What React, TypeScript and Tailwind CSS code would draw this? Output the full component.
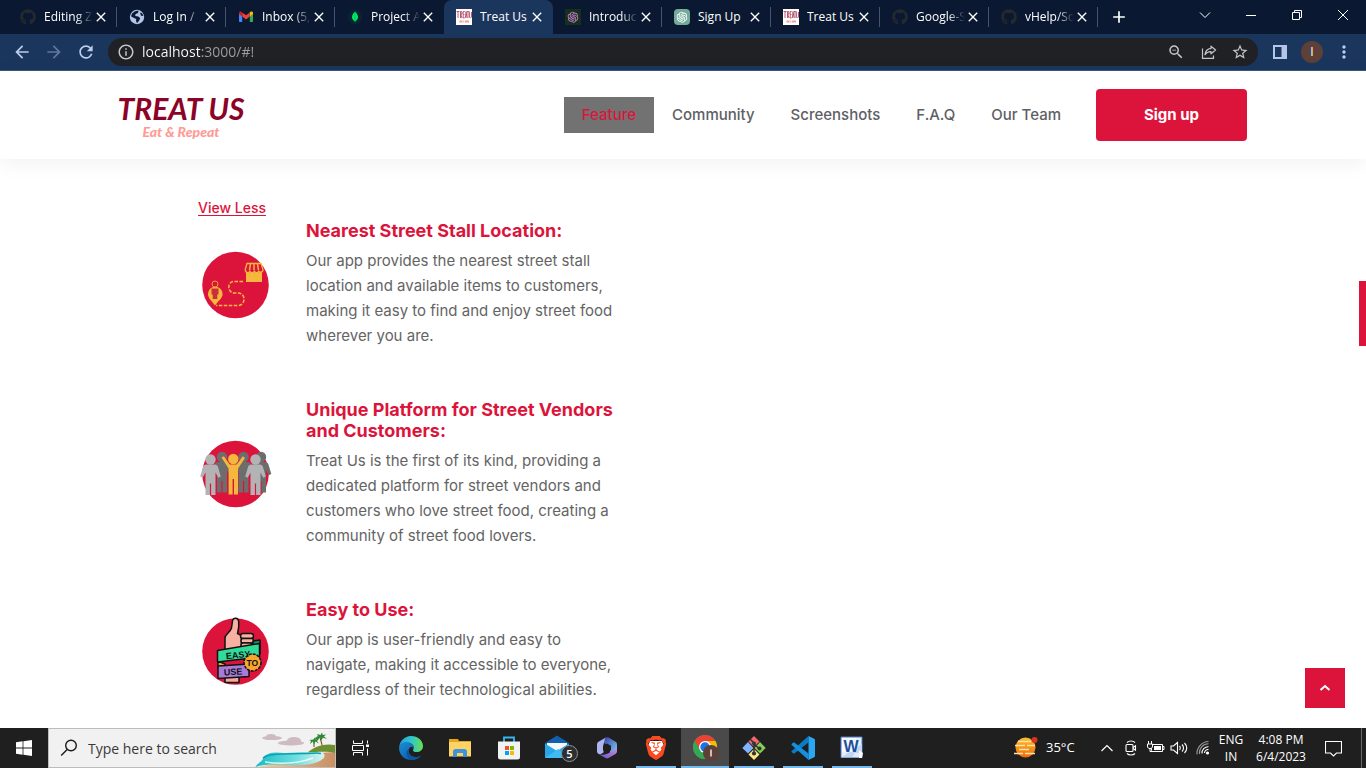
import React from "react";
import { FaGithub } from "react-icons/fa";
import { AiOutlineOpenAI } from "react-icons/ai";
import { SiBrave } from "react-icons/si";
import {
  MdArrowBack,
  MdArrowForward,
  MdRefresh,
  MdInfoOutline,
  MdStarBorder,
  MdZoomOut,
  MdMoreVert,
  MdClose,
  MdAdd,
} from "react-icons/md";

/* ---------- Favicons ---------- */

function GithubMark() {
  return <FaGithub className="size-4 shrink-0 text-[#24292e]" />;
}

function GlobeMark() {
  return (
    <svg viewBox="0 0 16 16" className="size-4 shrink-0">
      <circle cx="8" cy="8" r="7.2" fill="#b4c5e8" />
      <path d="M6 2.2 9.5 1.5 9 4 6.6 5l-.4 2 3.2.4 1.8 1.8-1 2.4-2.2 2.6-1-2.2.2-2L4 8.4 2 7.2 3 4.6Z" fill="#0a1931" />
      <path d="m11 3.5 2.4 1 .8 2.6-2.2-.4Z" fill="#0a1931" />
    </svg>
  );
}

function GmailMark() {
  return (
    <svg viewBox="0 0 16 16" className="size-4 shrink-0">
      <path d="M1 4v8.2c0 .5.4.9.9.9h2.3V6.4Z" fill="#4285f4" />
      <path d="M15 4v8.2c0 .5-.4.9-.9.9h-2.3V6.4Z" fill="#34a853" />
      <path d="M11.800 3.500v4L15 5.100V4c0-1.400-1.500-1.900-2.500-1.200Z" fill="#fbbc04" />
      <path d="M4.200 7.500v-4L8 6.300l3.800-2.800v4L8 10.400Z" fill="#ea4335" />
      <path d="M1 4v1.100l3.200 2.400v-4l-.7-.6C2.500 2.100 1 2.700 1 4Z" fill="#c5221f" />
    </svg>
  );
}

function LeafMark() {
  return (
    <svg viewBox="0 0 16 16" className="size-4 shrink-0">
      <circle cx="8" cy="8" r="7.500" fill="#062431" />
      <path d="M8 2.500c2 2.200 3 3.800 3 5.600 0 2-1.200 3.200-2.700 4.200L8 14l-.3-1.700C6.200 11.300 5 10.100 5 8.100c0-1.800 1-3.400 3-5.600Z" fill="#00ed64" />
      <path d="M8 3v9.500" stroke="#00a34a" strokeWidth=".6" />
    </svg>
  );
}

function TreatMark() {
  return (
    <svg viewBox="0 0 16 16" className="size-4 shrink-0">
      <path fill="#fff" d="M0 0h16v16H0z" />
      <g stroke="#b04a64" strokeWidth=".9" fill="none">
        <path d="M.5 2.500h3M2 2.500V9M4.500 9V2.500h1.300L6 5H4.700L6 9M8.700 2.500H7.200V9h1.500M7.200 5.500h1.300M9.300 9l.8-6.500.9 6.500M10.900 2.500h2M12 2.500V9M13.600 2.500V8.500h1M15.500 3v5.500" />
      </g>
      <path d="M3.500 12.500h3M7.300 12.500h1M9 12.500h4" stroke="#f79a9a" strokeWidth="1.800" />
    </svg>
  );
}

function KnotDark() {
  return (
    <span className="flex size-4 shrink-0 items-center justify-center bg-[#17301c]">
      <AiOutlineOpenAI className="size-3.5 text-[#c77fd6]" />
    </span>
  );
}

function KnotGreen() {
  return (
    <span className="flex size-4 shrink-0 items-center justify-center rounded-sm bg-[#74aa9c]">
      <AiOutlineOpenAI className="size-3.5 text-white" />
    </span>
  );
}

const tabs = [
  { title: "Editing Z", icon: <GithubMark /> },
  { title: "Log In /", icon: <GlobeMark /> },
  { title: "Inbox (5,", icon: <GmailMark /> },
  { title: "Project A", icon: <LeafMark /> },
  { title: "Treat Us", icon: <TreatMark />, active: true },
  { title: "Introduc", icon: <KnotDark /> },
  { title: "Sign Up", icon: <KnotGreen /> },
  { title: "Treat Us", icon: <TreatMark /> },
  { title: "Google-S", icon: <GithubMark /> },
  { title: "vHelp/So", icon: <GithubMark /> },
];

function TabStrip() {
  return (
    <div className="flex h-[34px] bg-[#0a1931] pl-2 text-white">
      <div className="flex w-[1090px] min-w-0">
        {tabs.map((tab, i) => (
          <div
            key={i}
            className={
              tab.active
                ? "relative flex min-w-0 flex-1 items-center rounded-t-lg bg-[#1b365d] pr-2 pl-3"
                : "relative flex min-w-0 flex-1 items-center pr-2 pl-3"
            }
          >
            {tab.icon}
            <span
              className={
                tab.title === "Treat Us" || tab.title === "Sign Up"
                  ? "ml-2 min-w-0 flex-1 overflow-hidden text-[12px] leading-4 whitespace-nowrap"
                  : "ml-2 min-w-0 flex-1 overflow-hidden text-[12px] leading-4 whitespace-nowrap [mask-image:linear-gradient(to_right,black_65%,transparent)]"
              }
            >
              {tab.title}
            </span>
            <button aria-label={`Close ${tab.title}`} className="shrink-0">
              <MdClose className="size-4" />
            </button>
            {!tab.active && i !== 3 && (
              <span className="absolute top-[7px] right-0 h-5 w-px bg-[#46536a]" />
            )}
          </div>
        ))}
      </div>
      <button aria-label="New tab" className="ml-[11px]">
        <MdAdd className="size-5" />
      </button>
      <div className="ml-auto flex items-center pb-1">
        <button aria-label="Search tabs" className="flex w-[46px] justify-center">
          <svg viewBox="0 0 12 12" className="size-3" fill="none" stroke="white">
            <path d="m1 3.500 5 5 5-5" />
          </svg>
        </button>
        <button aria-label="Minimize" className="flex w-[46px] justify-center">
          <svg viewBox="0 0 10 10" className="size-2.5" stroke="white">
            <path d="M0 5.500h10" />
          </svg>
        </button>
        <button aria-label="Restore" className="flex w-[46px] justify-center">
          <svg viewBox="0 0 10 10" className="size-2.5" fill="none" stroke="white">
            <path d="M.5 2.500h7v7h-7zM2.500 2.500v-2h7v7h-2" />
          </svg>
        </button>
        <button aria-label="Close window" className="flex w-[46px] justify-center">
          <svg viewBox="0 0 10 10" className="size-2.5" stroke="white">
            <path d="m0 0 10 10M10 0 0 10" />
          </svg>
        </button>
      </div>
    </div>
  );
}

function Toolbar() {
  return (
    <div className="flex h-[37px] items-center border-b border-[#3d5681] bg-[#1b365d] pr-3 pl-3">
      <button aria-label="Back" className="mr-3">
        <MdArrowBack className="size-5 text-[#bccdec]" />
      </button>
      <button aria-label="Forward" className="mr-3">
        <MdArrowForward className="size-5 text-[#61779c]" />
      </button>
      <button aria-label="Reload" className="mr-3">
        <MdRefresh className="size-5 text-[#bccdec]" />
      </button>
      <div className="flex h-7 min-w-0 flex-1 items-center rounded-full bg-[#202124] px-[9px] text-[#c4c7ca]">
        <MdInfoOutline className="size-[18px] shrink-0" />
        <div className="relative ml-[7px] h-6 flex-1 text-[14px] leading-6">
          <input
            aria-label="Address"
            defaultValue="localhost:3000/#!"
            className="block h-6 w-full bg-transparent bg-gradient-to-r from-white from-[58px] to-[#9aa0a6] to-[58px] bg-clip-text text-transparent outline-none"
          />
        </div>
        <button aria-label="Zoom">
          <MdZoomOut className="size-[18px]" />
        </button>
        <button aria-label="Share" className="ml-4">
          <svg viewBox="0 0 16 16" className="size-4" fill="none" stroke="currentColor" strokeWidth="1.200">
            <path d="M1.500 4.500v9.900h11v-3" />
            <path d="M10 2.200 14.600 6 10 9.800V7.600C7 7.500 5.300 8.600 4 10.800c.4-3.700 2.600-6 6-6.400Z" strokeLinejoin="round" />
          </svg>
        </button>
        <button aria-label="Bookmark" className="ml-[14px]">
          <MdStarBorder className="size-[18px]" />
        </button>
      </div>
      <button aria-label="Side panel" className="ml-[15px]">
        <svg viewBox="0 0 14 14" className="size-3.5">
          <path d="M1 1h12v12H1z" fill="none" stroke="#b4c5e8" strokeWidth="2" />
          <path d="M8.500 0H14v14H8.500z" fill="#b4c5e8" />
        </svg>
      </button>
      <button className="ml-[14px] size-[22px] rounded-full bg-[#5d4037] text-[12px] leading-[22px] text-white">
        I
      </button>
      <button aria-label="Menu" className="ml-[11px]">
        <MdMoreVert className="size-5 text-[#bccdec]" />
      </button>
    </div>
  );
}

/* ---------- Site ---------- */

function SiteHeader() {
  return (
    <header className="flex h-[88px] shrink-0 items-center bg-white pr-[119px] pl-[117px] shadow-[0_4px_20px_rgba(0,0,0,0.06)]">
      <a href="#home" className="flex w-32 flex-col items-center pt-1 italic">
        <span className="font-['Lato',sans-serif] text-[30px] leading-[30px] font-bold whitespace-nowrap text-[#8c0327]">
          TREAT US
        </span>
        <span className="font-['Lato',sans-serif] text-[14px] leading-[18px] font-black whitespace-nowrap text-[#ff9b95]">
          Eat &amp; Repeat
        </span>
      </a>
      <nav className="ml-auto flex items-center text-[15px] leading-[18px] font-medium text-[#5d6064]">
        <a href="#feature" className="bg-[#727272] px-[18px] py-[9px] text-[#dc143c]">
          Feature
        </a>
        <a href="#community" className="px-[18px]">
          Community
        </a>
        <a href="#screenshots" className="px-[18px]">
          Screenshots
        </a>
        <a href="#faq" className="px-[18px]">
          F.A.Q
        </a>
        <a href="#team" className="pr-[35px] pl-[18px]">
          Our Team
        </a>
        <button className="h-[52px] w-[151px] rounded bg-[#dc143c] font-bold text-white">
          Sign up
        </button>
      </nav>
    </header>
  );
}

function RouteIcon() {
  return (
    <svg viewBox="0 0 100 90" className="h-[90px] w-[100px]">
      <circle cx="45.500" cy="46" r="33.300" fill="#dc143c" />
      <g fill="none" stroke="#f5b83d" strokeWidth="1.500" strokeDasharray="3.500 1.500">
        <path d="M53 42.500h-9c-7 0-7 11 0 11.500h4c8 0 8 12.500 0 12.500H26" />
      </g>
      <path d="M25 66.500c-3-4.500-7-7-7-11.500a7.300 7.300 0 0 1 14.600 0c0 4.500-4.600 7-7.600 11.500Z" fill="#f5b83d" />
      <circle cx="25" cy="45" r="3" fill="#dc143c" stroke="#e8a13b" />
      <path d="M21.500 49.500h7v6h-1.200V60h-4.600v-4.500h-1.200Z" fill="#c8303a" />
      <path d="M56 33.500h16V43H56z" fill="#f5b83d" />
      <path d="M57 24.500h14l2 6c0 3.500-4 3.500-4.300 1-.3 3-4 3-4.300 0-.3 3-4.300 3-4.600 0-.3 3-4.300 3-4.600-1Z" fill="#dc143c" stroke="#f5b83d" strokeWidth="1.300" />
      <path d="m60.500 25-1 6M64 25v6M67.500 25l1 6" stroke="#f5b83d" strokeWidth="1.500" />
    </svg>
  );
}

function Person({ x, y, fill }: { x: number; y: number; fill: string }) {
  return (
    <g transform={`translate(${x} ${y})`} fill={fill}>
      <circle cx="0" cy="0" r="5.200" />
      <path d="M-4 5h8c2 0 3 1 3.500 2.500L10.300 17l-2.500 1.200L5 13v22.500H.6V24H-.6v11.500H-5V13l-2.800 5.200-2.500-1.200L-7.500 7.500C-7 6-6 5-4 5Z" />
    </g>
  );
}

function PeopleIcon() {
  return (
    <svg viewBox="0 0 100 90" className="h-[90px] w-[100px]">
      <circle cx="45.500" cy="45" r="33.300" fill="#dc143c" />
      <Person x={32} y={28} fill="#6d6d6d" />
      <Person x={53.500} y={28} fill="#6d6d6d" />
      <Person x={71} y={28} fill="#6d6d6d" />
      <Person x={20.500} y={30.500} fill="#b3b2b4" />
      <Person x={65.500} y={30.500} fill="#b3b2b4" />
      <g fill="#f5b83d">
        <circle cx="43.300" cy="30" r="5.200" />
        <path d="m31.500 28.500 2.300-1.200 6 8.200h7l6-8.200 2.200 1.700-7 10.500v26h-4V50h-1.400v15.500h-4v-26Z" />
      </g>
    </svg>
  );
}

function EasyIcon() {
  return (
    <svg viewBox="0 0 100 90" className="h-[90px] w-[100px]">
      <circle cx="45.500" cy="45.500" r="33.300" fill="#dc143c" />
      <g stroke="#111" strokeWidth="1.500" strokeLinejoin="round">
        <path d="M35 65h14v11.500H35Z" fill="#f4a99a" />
        <path d="m28 55 7 3v6l-7-2Z" fill="#f5a42c" />
        <path d="M35 45V32c0-4 5-5 6.500-10l1-7c.3-4 6-3.500 6.200.5.5 6-.7 9.500-1.200 12l4 2v14Z" fill="#f8b0a2" />
        <rect x="50.500" y="27.500" width="13" height="5" rx="2.500" fill="#f8b0a2" />
        <rect x="51" y="32.500" width="12.500" height="4.500" rx="2" fill="#f8b0a2" />
        <rect x="51" y="37" width="11" height="4.500" rx="2" fill="#f8b0a2" />
        <path d="m63 35 7-1v14l-7 4Z" fill="#16896d" />
        <path d="m27.500 44.500 42-7V51l-42 5Z" fill="#2fdc9a" />
        <path d="m28 60 31-2v12.500l-31 2Z" fill="#a77bd8" />
        <circle cx="62.500" cy="56.500" r="8.500" fill="#f7a72f" strokeDasharray="3 1" />
      </g>
      <g fill="#111" fontFamily="Liberation Sans, sans-serif" fontWeight="700">
        <text x="36" y="52" fontSize="9" transform="rotate(-6 49 50)">EASY</text>
        <text x="34" y="69" fontSize="9" transform="rotate(-3 42 67)">USE</text>
        <text x="56.500" y="60" fontSize="8.500">TO</text>
      </g>
    </svg>
  );
}

const features = [
  {
    icon: <RouteIcon />,
    title: ["Nearest Street Stall Location:"],
    body: [
      "Our app provides the nearest street stall",
      "location and available items to customers,",
      "making it easy to find and enjoy street food",
      "wherever you are.",
    ],
  },
  {
    icon: <PeopleIcon />,
    title: ["Unique Platform for Street Vendors", "and Customers:"],
    body: [
      "Treat Us is the first of its kind, providing a",
      "dedicated platform for street vendors and",
      "customers who love street food, creating a",
      "community of street food lovers.",
    ],
  },
  {
    icon: <EasyIcon />,
    title: ["Easy to Use:"],
    body: [
      "Our app is user-friendly and easy to",
      "navigate, making it accessible to everyone,",
      "regardless of their technological abilities.",
    ],
  },
];

function Lines({ items }: { items: string[] }) {
  return (
    <>
      {items.map((line, i) => (
        <span key={i} className="block whitespace-nowrap">
          {line}
        </span>
      ))}
    </>
  );
}

function Site() {
  return (
    <div className="relative flex flex-1 flex-col bg-white font-['Inter','Noto_Sans',sans-serif]">
      <SiteHeader />
      <main className="pt-[38px] pl-[190px]">
        <a href="#less" className="ml-2 block w-fit text-[14px] leading-[22px] font-medium text-[#dc143c] underline underline-offset-2">
          View Less
        </a>
        <div className="mt-px flex flex-col gap-[51px]">
          {features.map((f) => (
            <section key={f.title[0]} className="flex items-center">
              {f.icon}
              <div className="ml-4">
                <h3 className="text-[18px] leading-[21px] font-bold text-[#dc143c]">
                  <Lines items={f.title} />
                </h3>
                <p className="mt-[7px] text-[15px] leading-[25px] text-[#646464]">
                  <Lines items={f.body} />
                </p>
              </div>
            </section>
          ))}
        </div>
      </main>
      <div className="absolute top-[210px] right-0 h-[65px] w-[7px] bg-[#dc143c]" />
      <button
        aria-label="Back to top"
        className="absolute right-[21px] bottom-5 flex size-10 items-center justify-center bg-[#dc143c]"
      >
        <svg viewBox="0 0 12 12" className="size-3" fill="none" stroke="white" strokeWidth="2">
          <path d="m1.500 8 4.500-4 4.500 4" />
        </svg>
      </button>
    </div>
  );
}

/* ---------- Taskbar ---------- */

function BeachArt() {
  return (
    <svg viewBox="0 0 80 38" className="h-[38px] w-20 shrink-0">
      <defs>
        <linearGradient id="sea" x1="0" x2="1">
          <stop offset="0" stopColor="#13bcc4" />
          <stop offset=".6" stopColor="#6fdfe0" />
          <stop offset="1" stopColor="#d9f4f0" />
        </linearGradient>
        <linearGradient id="sand" x1="0" x2="1">
          <stop offset="0" stopColor="#f3cfa6" />
          <stop offset="1" stopColor="#c98f63" />
        </linearGradient>
      </defs>
      <g fill="#cdbac2">
        <ellipse cx="17" cy="9" rx="10" ry="2" />
        <ellipse cx="16" cy="7.500" rx="5" ry="2.500" />
        <ellipse cx="36" cy="14" rx="13" ry="2.500" />
        <ellipse cx="39" cy="11.500" rx="7" ry="3.500" />
      </g>
      <path d="M2 38c24-4 46-14 78-15v15Z" fill="url(#sand)" />
      <path d="M52 24c7-7 18-10 28-8v8c-8-2-18-1-28 0Z" fill="#6c8f2f" />
      <path d="M0 38c4-5 8-6 8-9 4-6 12-6 22-5 14-1 30-1 38 0 6 5-6 12-24 12-16 0-32-2-44 2Z" fill="url(#sea)" />
      <path d="M8 29c5-5 22-4 40-4.500 9 0 15-1 18 0" fill="none" stroke="#0aa0b0" strokeWidth="1.500" />
      <path d="M10 33c14 2 32 2 48-4" fill="none" stroke="#fff" strokeWidth="1.500" opacity=".8" />
      <path d="M59 18V12M67 16l-2-8" stroke="#7a5230" strokeWidth="1.100" />
      <path d="m55 15 1-3-1.500-1 4-.5 1-2 1.500 2 3-.500-2 2 2 2.500-3.500-2-1.500 3-1-3Zm5-6 3-2-1-2 3.500 1L67 3.500l.8 2.500L71 5.500l-2 2 3 2.500-4-1.200-2 3-.5-3.200L62 11Z" fill="#2f8a35" />
    </svg>
  );
}

function EdgeIcon() {
  return (
    <svg viewBox="0 0 24 24" className="size-6">
      <defs>
        <linearGradient id="edgeTop" x1="0" x2="1">
          <stop offset="0" stopColor="#249fdd" />
          <stop offset=".5" stopColor="#30c5ce" />
          <stop offset="1" stopColor="#68df50" />
        </linearGradient>
        <linearGradient id="edgeLow" x1="0" x2="1" y1="0" y2="1">
          <stop offset="0" stopColor="#1b8fd8" />
          <stop offset="1" stopColor="#0b4d9b" />
        </linearGradient>
      </defs>
      <path d="M.2 11C.8 5 5.500 0 12 0c7 0 12 4.900 12 9.900 0 4-3.200 6.100-6.200 6.100-3.200 0-4.400-1.300-3.600-2.600C16.500 9 11 6 6.500 6.700 3 7.200.8 9 .2 11Z" fill="url(#edgeTop)" />
      <path d="M.1 12C.4 7 6 5 10 6.500c3 1 4.800 3.200 4.500 5.500-1-1.300-3-1.300-4.300.5-2 3.500.8 7.900 5.300 8.500 2.500.3 4.500-.4 6.700-1.600C19.700 22.500 16 24 12 24 5.400 24 0 18.600.1 12Z" fill="url(#edgeLow)" />
      <path d="M9.900 13c-1.400 4 1.600 7.600 5.600 8 2.500.3 4.500-.4 6.700-1.600C19.700 22.500 16 24 12.500 24 7.500 22.500 5.500 15 9.900 13Z" fill="#0a56a5" />
    </svg>
  );
}

function FolderIcon() {
  return (
    <svg viewBox="0 0 24 24" className="size-6">
      <path d="M1 3h9l1 2h12v15H1Z" fill="#e6a51c" />
      <path d="M1 6h22v14.500H1Z" fill="#fdd365" />
      <path d="M5 21v-6.500L7 13h10l2 1.500V21h-4v-4H9v4Z" fill="#3d94dd" />
    </svg>
  );
}

function StoreIcon() {
  return (
    <svg viewBox="0 0 24 24" className="size-6">
      <path d="M7 7V1.500h10V7" fill="none" stroke="#38b6ee" strokeWidth="1.800" />
      <path d="M1 5.500h22V21a2.500 2.500 0 0 1-2.500 2.500h-17A2.500 2.500 0 0 1 1 21Z" fill="#f1f2f3" />
      <path d="M8 10h4v4H8Z" fill="#f25022" />
      <path d="M13 10h4v4h-4Z" fill="#7fba00" />
      <path d="M8 15h4v4H8Z" fill="#00a4ef" />
      <path d="M13 15h4v4h-4Z" fill="#ffb900" />
    </svg>
  );
}

function MailIcon() {
  return (
    <svg viewBox="0 0 34 28" className="ml-2 h-7 w-[34px]">
      <path d="M0 9 12 1.500 24 9v3H0Z" fill="#1260ad" />
      <path d="M2 9h20v9H2Z" fill="#f4f7fa" />
      <path d="M0 9.500 12 17l12-7.500V24H0Z" fill="#28a8ea" />
      <path d="M0 24 13 15l11 9Z" fill="#3fbcf5" />
      <circle cx="24.500" cy="19.500" r="8" fill="#2d2f31" stroke="#8e9091" />
      <text x="24.500" y="23.500" fontSize="11" textAnchor="middle" fill="#fff" fontFamily="Open Sans, sans-serif" fontWeight="600">5</text>
    </svg>
  );
}

function M365Icon() {
  return (
    <svg viewBox="0 0 24 24" className="size-6">
      <defs>
        <linearGradient id="mA" x1="0" y1="0" x2="1" y2="1">
          <stop offset="0" stopColor="#3a3fa8" />
          <stop offset="1" stopColor="#7fd0f5" />
        </linearGradient>
        <linearGradient id="mB" x1="0" y1="1" x2="1" y2="0">
          <stop offset="0" stopColor="#5a56c5" />
          <stop offset="1" stopColor="#d48be5" />
        </linearGradient>
      </defs>
      <path d="M10 2 3.500 5.700A3 3 0 0 0 2 8.300v7c0 2 2 3.500 4 2.700l2.500-1.500V8.500c0-3 4-2 4-4.500C12.500 2 11 1.400 10 2Z" fill="#aeb4ee" />
      <path d="m10 2-1 5 6 3.500v7l5.500-3.200A3 3 0 0 0 22 12V8.300a3 3 0 0 0-1.500-2.600L13.500 1.500A3.300 3.300 0 0 0 10 2Z" fill="url(#mA)" />
      <path d="M2.500 17.500 10.500 22a3 3 0 0 0 3 0l7-4A3 3 0 0 0 22 15.300V11c-.5 2-6 5-9 6.500-4 1.500-7.500 2-10.500 0Z" fill="url(#mB)" />
      <path d="m12 7.500 4 2.200v4.600l-4 2.200-4-2.200V9.700Z" fill="#1f1f1f" />
    </svg>
  );
}

function BraveIcon() {
  return (
    <span className="relative flex size-6 items-center justify-center">
      <svg viewBox="0 0 24 24" className="absolute size-6">
        <path d="M6 5h12l2 5-3 9-5 4-5-4-3-9Z" fill="#fff" />
      </svg>
      <SiBrave className="relative size-6 text-[#fb4a1f]" />
    </span>
  );
}

function ChromeIcon() {
  return (
    <svg viewBox="0 0 26 26" className="ml-0.5 size-[26px]">
      <circle cx="12" cy="12" r="12" fill="#34a853" />
      <path d="M12 12 1.600 6A12 12 0 0 1 22.400 6Z" fill="#ea4335" />
      <path d="M12 6h10.400A12 12 0 0 1 12 24l5.200-9Z" fill="#fbbc04" />
      <path d="M1.600 6 6.800 15 12 12V6Z" fill="#ea4335" />
      <path d="m1.600 6 5.200 9L12 24A12 12 0 0 1 1.600 6Z" fill="#34a853" />
      <circle cx="12" cy="12" r="6" fill="#fff" />
      <circle cx="12" cy="12" r="4.700" fill="#1a73e8" />
      <circle cx="18" cy="18" r="8" fill="#5d4037" />
      <path d="M18 14.500v7" stroke="#e7dfdc" strokeWidth="1.600" />
    </svg>
  );
}

function GitIcon() {
  return (
    <svg viewBox="0 0 24 24" className="size-6">
      <path d="m12 0 5.500 5.500L12 11 6.500 5.500Z" fill="#f0686b" />
      <path d="m6 6 5.500 6L6 17.500.3 12Z" fill="#80b3ff" />
      <path d="m18 6 5.700 6-5.700 5.500-5.500-5.500Z" fill="#84cf54" />
      <path d="m12 13 5.500 5.500L12 24l-5.500-5.500Z" fill="#ffe680" />
      <path d="M8.500 3.500 12 7v11M12 8l5 4.500" fill="none" stroke="#333" strokeWidth="1.500" />
      <circle cx="12" cy="7.500" r="1.900" fill="#333" />
      <circle cx="12" cy="17.500" r="2.100" fill="#333" />
      <circle cx="17.500" cy="12.500" r="2" fill="#333" />
    </svg>
  );
}

function CodeIcon() {
  return (
    <svg viewBox="0 0 24 24" className="size-6">
      <path d="M17.500 0v6.500L3 17.700.7 16.200a.8.800 0 0 1 0-1.200Z" fill="#0a7bc4" />
      <path d="M17.500 24v-6.500L3 6.300.7 7.800a.8.800 0 0 0 0 1.200Z" fill="#1490df" />
      <path d="M17.500 0 23.200 2.700a1.400 1.400 0 0 1 .8 1.300v16c0 .6-.3 1-.8 1.300L17.500 24Z" fill="#2ba6f2" />
    </svg>
  );
}

function WordIcon() {
  return (
    <svg viewBox="0 0 24 24" className="size-6">
      <path d="M1 1h21v20.500H1Z" fill="#e9f0fa" stroke="#4b7fc9" />
      <path d="M1 21.500 22 8v13.500Z" fill="#c4d6ef" />
      <path d="M2 2h14v14H2Z" fill="#fff" opacity=".6" />
      <text x="11" y="15.500" fontSize="16" textAnchor="middle" fill="#1c4fa0" fontFamily="Liberation Sans, sans-serif" fontWeight="700">W</text>
      <path d="M14 18h6M13 20h8" stroke="#fff" />
      <path d="m19 14 4 3-1 5h-3Z" fill="#f8fafd" />
    </svg>
  );
}

const apps = [
  { name: "Edge", icon: <EdgeIcon />, state: "idle" },
  { name: "File Explorer", icon: <FolderIcon />, state: "idle" },
  { name: "Store", icon: <StoreIcon />, state: "idle" },
  { name: "Mail", icon: <MailIcon />, state: "idle" },
  { name: "Microsoft 365", icon: <M365Icon />, state: "idle" },
  { name: "Brave", icon: <BraveIcon />, state: "open" },
  { name: "Chrome", icon: <ChromeIcon />, state: "focused" },
  { name: "Git Bash", icon: <GitIcon />, state: "open" },
  { name: "Code", icon: <CodeIcon />, state: "open" },
  { name: "Word", icon: <WordIcon />, state: "open" },
];

function AppButton({ name, icon, state }: { name: string; icon: React.ReactNode; state: string }) {
  return (
    <button
      aria-label={name}
      className={
        state === "focused"
          ? "relative flex h-10 w-12 shrink-0 items-center justify-center bg-[#4a4a4a]"
          : "relative flex h-10 w-12 shrink-0 items-center justify-center"
      }
    >
      {icon}
      {state === "open" && <span className="absolute inset-x-1 bottom-0 h-0.5 bg-[#76b9ed]" />}
      {state === "focused" && <span className="absolute inset-x-0 bottom-0 h-0.5 bg-[#76b9ed]" />}
    </button>
  );
}

function Weather() {
  return (
    <svg viewBox="0 0 26 24" className="h-6 w-[26px]">
      <defs>
        <linearGradient id="sun" x1="0" y1="0" x2="0" y2="1">
          <stop offset="0" stopColor="#fbc02a" />
          <stop offset="1" stopColor="#ee6a0c" />
        </linearGradient>
      </defs>
      <circle cx="12.500" cy="11.500" r="10" fill="url(#sun)" />
      <path d="M5 5.500h13M2 9.500h10M14 9.500h8M6 13.500h10M1 17.500h9M12 17.500h10" stroke="#ffe0a8" strokeWidth="1.500" />
      <circle cx="21.500" cy="4" r="3" fill="#d9331f" />
    </svg>
  );
}

function Taskbar() {
  return (
    <footer className="flex h-10 shrink-0 items-center bg-[#1f1f1f] text-[12px] text-white">
      <button aria-label="Start" className="flex w-12 shrink-0 justify-center">
        <svg viewBox="0 0 16 16" className="size-4" fill="#fff">
          <path d="M0 2.200 6.600 1.300v6.300H0ZM7.400 1.200 16 0v7.600H7.400ZM0 8.400h6.600v6.300L0 13.800ZM7.400 8.400H16V16l-8.600-1.200Z" />
        </svg>
      </button>
      <div className="flex h-10 w-72 shrink-0 items-center border border-[#bdbdbd] bg-[#f1f1f1] pl-[11px]">
        <svg viewBox="0 0 18 18" className="size-[18px] shrink-0" fill="none" stroke="#1a1a1a" strokeWidth="1.400">
          <circle cx="11" cy="6.500" r="5.300" />
          <path d="m7.200 10.500-6 6" />
        </svg>
        <input
          aria-label="Search"
          placeholder="Type here to search"
          className="ml-2.5 h-6 w-0 min-w-0 flex-1 bg-transparent text-[14px] text-[#333] outline-none placeholder:text-[#3a3a3a]"
        />
        <BeachArt />
      </div>
      <button aria-label="Task view" className="flex w-12 shrink-0 justify-center">
        <svg viewBox="0 0 17 16" className="h-4 w-[17px]" fill="none" stroke="#fff">
          <path d="M1.500.5v3h9v-3M1.500 15.500v-3h9v3M.5 5.500h11v5H.500ZM15.500.5v3M15.500 8.500v7" />
          <path d="M14 4.500h3v2.500h-3z" fill="#fff" stroke="none" />
        </svg>
      </button>
      <div className="ml-[3px] flex gap-px">
        {apps.map((a) => (
          <AppButton key={a.name} {...a} />
        ))}
      </div>
      <div className="ml-auto flex h-10 items-center">
        <Weather />
        <span className="ml-[7px] w-[49px] text-[13px]">35°C</span>
        <button aria-label="Show hidden icons" className="flex w-6 justify-center">
          <svg viewBox="0 0 12 12" className="size-3" fill="none" stroke="#fff" strokeWidth="1.200">
            <path d="m.5 9 5.500-5.500L11.500 9" />
          </svg>
        </button>
        <svg viewBox="0 0 24 16" className="h-4 w-6" fill="none" stroke="#fff" strokeWidth="1.100">
          <path d="M8 2.500c2-2 6-2 8 0M8 13.500c2 2 6 2 8 0" />
          <rect x="7" y="4.500" width="7" height="7" rx="1" />
          <path d="m14 7.500 2.500-1.700v4.400L14 8.500" />
        </svg>
        <svg viewBox="0 0 24 16" className="h-4 w-6" fill="none" stroke="#fff">
          <path d="M8.500 4.500h11v7h-11zM19.500 6.500h1.500v3h-1.500" />
          <path d="M11 6h7v4h-7z" fill="#fff" stroke="none" />
          <path d="M5.500 1v3M8.500 1v3M4.500 4h5v2c0 2-1 2.500-2.500 2.500S4.500 8 4.500 6ZM7 8.500v3h2" fill="#1f1f1f" />
        </svg>
        <svg viewBox="0 0 24 16" className="h-4 w-6" fill="none" stroke="#fff" strokeWidth="1.100">
          <path d="M4 6h2.500l4-3.500v11L6.500 10H4ZM12.500 6c1 1 1 3 0 4M15 4.500c2 2 2 5 0 7M17.500 3c3 3 3 7 0 10" />
        </svg>
        <svg viewBox="0 0 24 16" className="h-4 w-6" fill="none" stroke="#fff" strokeWidth="1.100">
          <path d="M13.500 13a3.500 3.500 0 0 1 4-3.500M11 13.500a6.300 6.300 0 0 1 6.500-6.800" />
          <path d="M8.500 14a9 9 0 0 1 9-10.200M6 14.500A12 12 0 0 1 17.500 1.500" stroke="#9a9a9a" />
          <circle cx="16.500" cy="13" r="1.600" fill="#fff" stroke="none" />
        </svg>
        <span className="w-8 text-center leading-[17px]">
          ENG
          <br />
          IN
        </span>
        <span className="w-[68px] text-center leading-[17px]">
          4:08 PM
          <br />
          6/4/2023
        </span>
        <button aria-label="Notifications" className="flex w-9 justify-center">
          <svg viewBox="0 0 17 17" className="size-[17px]" fill="none" stroke="#fff" strokeWidth="1.100">
            <path d="M.5 1.500h16v11.500h-5L8.500 16l-3-3h-5Z" />
          </svg>
        </button>
        <span className="mr-1 ml-2.5 h-10 w-px bg-[#6a6a6a]" />
      </div>
    </footer>
  );
}

export default function App() {
  return (
    <div className="flex min-h-screen flex-col overflow-hidden font-['Open_Sans','Noto_Sans',sans-serif]">
      <TabStrip />
      <Toolbar />
      <Site />
      <Taskbar />
    </div>
  );
}
